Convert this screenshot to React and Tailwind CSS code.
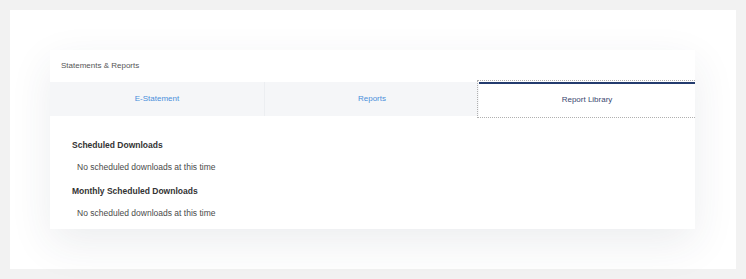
import React from "react";

export default function App() {
  const font = { fontFamily: '"Liberation Sans", Arial, sans-serif' };
  return (
    <div className="w-[746px] h-[279px] bg-[#f2f2f2] p-[10px]" style={font}>
      <div className="w-[726px] h-[259px] bg-white pt-[40px] pl-[40px] pr-[41px]">
        <div className="w-[645px] h-[179px] bg-white overflow-hidden shadow-[0_14px_40px_rgba(40,50,80,0.09)] flex flex-col">
          <div className="h-[32px] flex items-center pl-[11px] text-[8px] text-[#555]">
            Statements &amp; Reports
          </div>
          <div className="h-[34px] flex">
            <div className="w-[215px] bg-[#f5f6f8] border-r border-[#eceef1] flex items-center justify-center text-[8px] text-[#4a8fdb]">
              E-Statement
            </div>
            <div className="w-[214px] bg-[#f5f6f8] flex items-center justify-center text-[8px] text-[#4a8fdb]">
              Reports
            </div>
            <div className="flex-1 bg-white border-t-2 border-[#243c6e] flex items-center justify-center text-[8px] text-[#3a4870] outline outline-1 outline-dotted outline-[#b0b0b0] outline-offset-[1px]">
              <span>Report Library</span>
            </div>
          </div>
          <div className="pt-[23px] pl-[22px] pb-[10px]">
            <div className="h-[12px] leading-[12px] text-[8.5px] font-bold text-[#333]">
              Scheduled Downloads
            </div>
            <div className="mt-[10px] h-[12px] leading-[12px] pl-[5px] text-[8.5px] text-[#4a4a4a]">
              No scheduled downloads at this time
            </div>
            <div className="mt-[12px] h-[12px] leading-[12px] text-[8.5px] font-bold text-[#333]">
              Monthly Scheduled Downloads
            </div>
            <div className="mt-[10px] h-[12px] leading-[12px] pl-[5px] text-[8.5px] text-[#4a4a4a]">
              No scheduled downloads at this time
            </div>
          </div>
        </div>
      </div>
    </div>
  );
}
